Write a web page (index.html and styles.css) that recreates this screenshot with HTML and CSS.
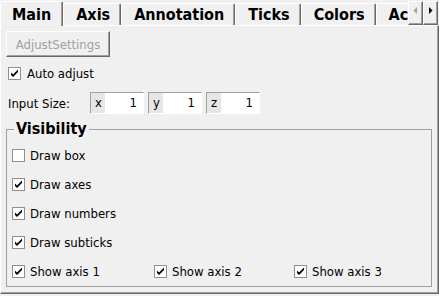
FILE: index.html
```html
<!doctype html>
<html lang="en">
<head>
  <meta charset="UTF-8">
  <title>Settings</title>
  <link rel="stylesheet" href="styles.css">
</head>
<body>

  <div class="tabbar">
    <div class="tabstrip">
      <div class="tab selected">Main</div>
      <div class="tab">Axis</div>
      <div class="tab">Annotation</div>
      <div class="tab">Ticks</div>
      <div class="tab">Colors</div>
      <div class="tab">Ac</div>
    </div>
    <div class="scroller">
      <span class="arrow"><svg width="13" height="21" viewBox="0 0 13 21"><polygon points="8,5 8,12 4.5,8.5" fill="#a0a0a0"/></svg></span>
      <span class="arrow"><svg width="13" height="21" viewBox="0 0 13 21"><polygon points="5,5 5,12 8.5,8.5" fill="#000"/></svg></span>
    </div>
  </div>

  <div class="panel">
    <button class="btn" disabled>AdjustSettings</button>

    <label class="check auto">
      <span class="box"><svg width="11" height="11" viewBox="0 0 11 11"><path d="M2 4.5 L4 6.5 L9 1.5 L9 4 L4 9 L2 7 Z"/></svg></span>
      Auto adjust
    </label>

    <div class="size-row">
      <span class="size-label">Input Size:</span>
      <div class="spin"><span class="lab">x</span><span class="val">1</span></div>
      <div class="spin"><span class="lab">y</span><span class="val">1</span></div>
      <div class="spin"><span class="lab">z</span><span class="val">1</span></div>
    </div>

    <fieldset class="group">
      <legend>Visibility</legend>
      <div class="rows">
        <label class="check">
          <span class="box"></span>
          Draw box
        </label>
        <label class="check">
          <span class="box"><svg width="11" height="11" viewBox="0 0 11 11"><path d="M2 4.5 L4 6.5 L9 1.5 L9 4 L4 9 L2 7 Z"/></svg></span>
          Draw axes
        </label>
        <label class="check">
          <span class="box"><svg width="11" height="11" viewBox="0 0 11 11"><path d="M2 4.5 L4 6.5 L9 1.5 L9 4 L4 9 L2 7 Z"/></svg></span>
          Draw numbers
        </label>
        <label class="check">
          <span class="box"><svg width="11" height="11" viewBox="0 0 11 11"><path d="M2 4.5 L4 6.5 L9 1.5 L9 4 L4 9 L2 7 Z"/></svg></span>
          Draw subticks
        </label>
        <div class="axis-row">
          <label class="check">
            <span class="box"><svg width="11" height="11" viewBox="0 0 11 11"><path d="M2 4.5 L4 6.5 L9 1.5 L9 4 L4 9 L2 7 Z"/></svg></span>
            Show axis 1
          </label>
          <label class="check">
            <span class="box"><svg width="11" height="11" viewBox="0 0 11 11"><path d="M2 4.5 L4 6.5 L9 1.5 L9 4 L4 9 L2 7 Z"/></svg></span>
            Show axis 2
          </label>
          <label class="check">
            <span class="box"><svg width="11" height="11" viewBox="0 0 11 11"><path d="M2 4.5 L4 6.5 L9 1.5 L9 4 L4 9 L2 7 Z"/></svg></span>
            Show axis 3
          </label>
        </div>
      </div>
    </fieldset>
  </div>

</body>
</html>
```

FILE: styles.css
```css
body {
  margin: 0;
  width: 439px;
  height: 296px;
  overflow: hidden;
  background-color: #f0f0f0;
  font-family: "DejaVu Sans Condensed", "DejaVu Sans", sans-serif;
  font-size: 13px;
  color: #000;
}

/* Tabs */
.tabbar {
  display: flex;
  height: 26px;
  position: relative;
  z-index: 1;
}

.tabstrip {
  display: flex;
  align-items: flex-start;
  flex: none;
  width: 408px;
  height: 26px;
  overflow: hidden;
}

.tab {
  box-sizing: border-box;
  flex: none;
  height: 22px;
  margin-top: 3px;
  padding: 2px 10px 0 12px;
  line-height: 17px;
  font-size: 16px;
  font-weight: bold;
  white-space: nowrap;
  border-top: 1px solid #fff;
  border-left: 1px solid #fff;
  border-right: 1px solid #696969;
  border-radius: 2px 2px 0 0;
  box-shadow: inset -1px 0 0 #a0a0a0;
  background-color: #f0f0f0;
}

.tab.selected {
  height: 26px;
  margin-top: 1px;
  padding: 4px 11px 0 11px;
}

.scroller {
  display: flex;
  flex: none;
  margin-top: 1px;
}

.arrow {
  box-sizing: border-box;
  width: 15px;
  height: 24px;
  border-top: 1px solid #fff;
  border-left: 1px solid #fff;
  border-right: 1px solid #696969;
  border-bottom: 1px solid #696969;
  box-shadow: inset -1px -1px 0 #a0a0a0;
}

.arrow svg {
  display: block;
}

/* Page */
.panel {
  box-sizing: border-box;
  margin-top: -1px;
  width: 439px;
  height: 269px;
  padding: 5px 0 0 5px;
  border-top: 1px solid #fff;
  border-left: 1px solid #fff;
  border-right: 1px solid #696969;
  border-bottom: 1px solid #696969;
  box-shadow: inset -1px -1px 0 #a0a0a0;
}

.btn {
  display: block;
  box-sizing: border-box;
  width: 104px;
  height: 26px;
  padding: 0;
  font-family: inherit;
  font-size: 13px;
  color: #a0a0a0;
  background-color: #f0f0f0;
  border-top: 1px solid #fff;
  border-left: 1px solid #fff;
  border-right: 1px solid #696969;
  border-bottom: 1px solid #696969;
  box-shadow: inset -1px -1px 0 #a0a0a0;
}

.check {
  display: flex;
  align-items: center;
  gap: 5px;
  height: 13px;
  line-height: 13px;
  white-space: nowrap;
}

.check.auto {
  margin-top: 10px;
  padding-left: 2px;
  gap: 6px;
}

.box {
  box-sizing: border-box;
  width: 13px;
  height: 13px;
  flex: none;
  border: 1px solid #8e8f8f;
  background-color: #fff;
}

.box svg {
  display: block;
}

.size-row {
  display: flex;
  align-items: center;
  gap: 4px;
  margin-top: 12px;
  padding-left: 2px;
  height: 22px;
}

.size-label {
  width: 78px;
}

.spin {
  box-sizing: border-box;
  display: flex;
  width: 54px;
  height: 22px;
  line-height: 20px;
  border-top: 1px solid #a0a0a0;
  border-left: 1px solid #a0a0a0;
  border-right: 1px solid #fff;
  border-bottom: 1px solid #fff;
}

.spin .lab {
  width: 10px;
  padding-left: 4px;
  background-color: #e6e6e6;
}

.spin .val {
  flex: 1;
  padding-right: 6px;
  text-align: right;
  background-color: #fff;
}

/* Visibility group */
.group {
  box-sizing: border-box;
  width: 426px;
  margin: 6px 0 0 0;
  padding: 11px 0 8px 5px;
  min-width: 0;
  border: 1px solid #a0a0a0;
}

.group legend {
  margin-left: 2px;
  padding: 0 2px;
  font-size: 16px;
  font-weight: bold;
  line-height: 18px;
}

.rows {
  display: flex;
  flex-direction: column;
  gap: 16px;
}

.axis-row {
  display: grid;
  grid-template-columns: 142px 140px auto;
}
```
